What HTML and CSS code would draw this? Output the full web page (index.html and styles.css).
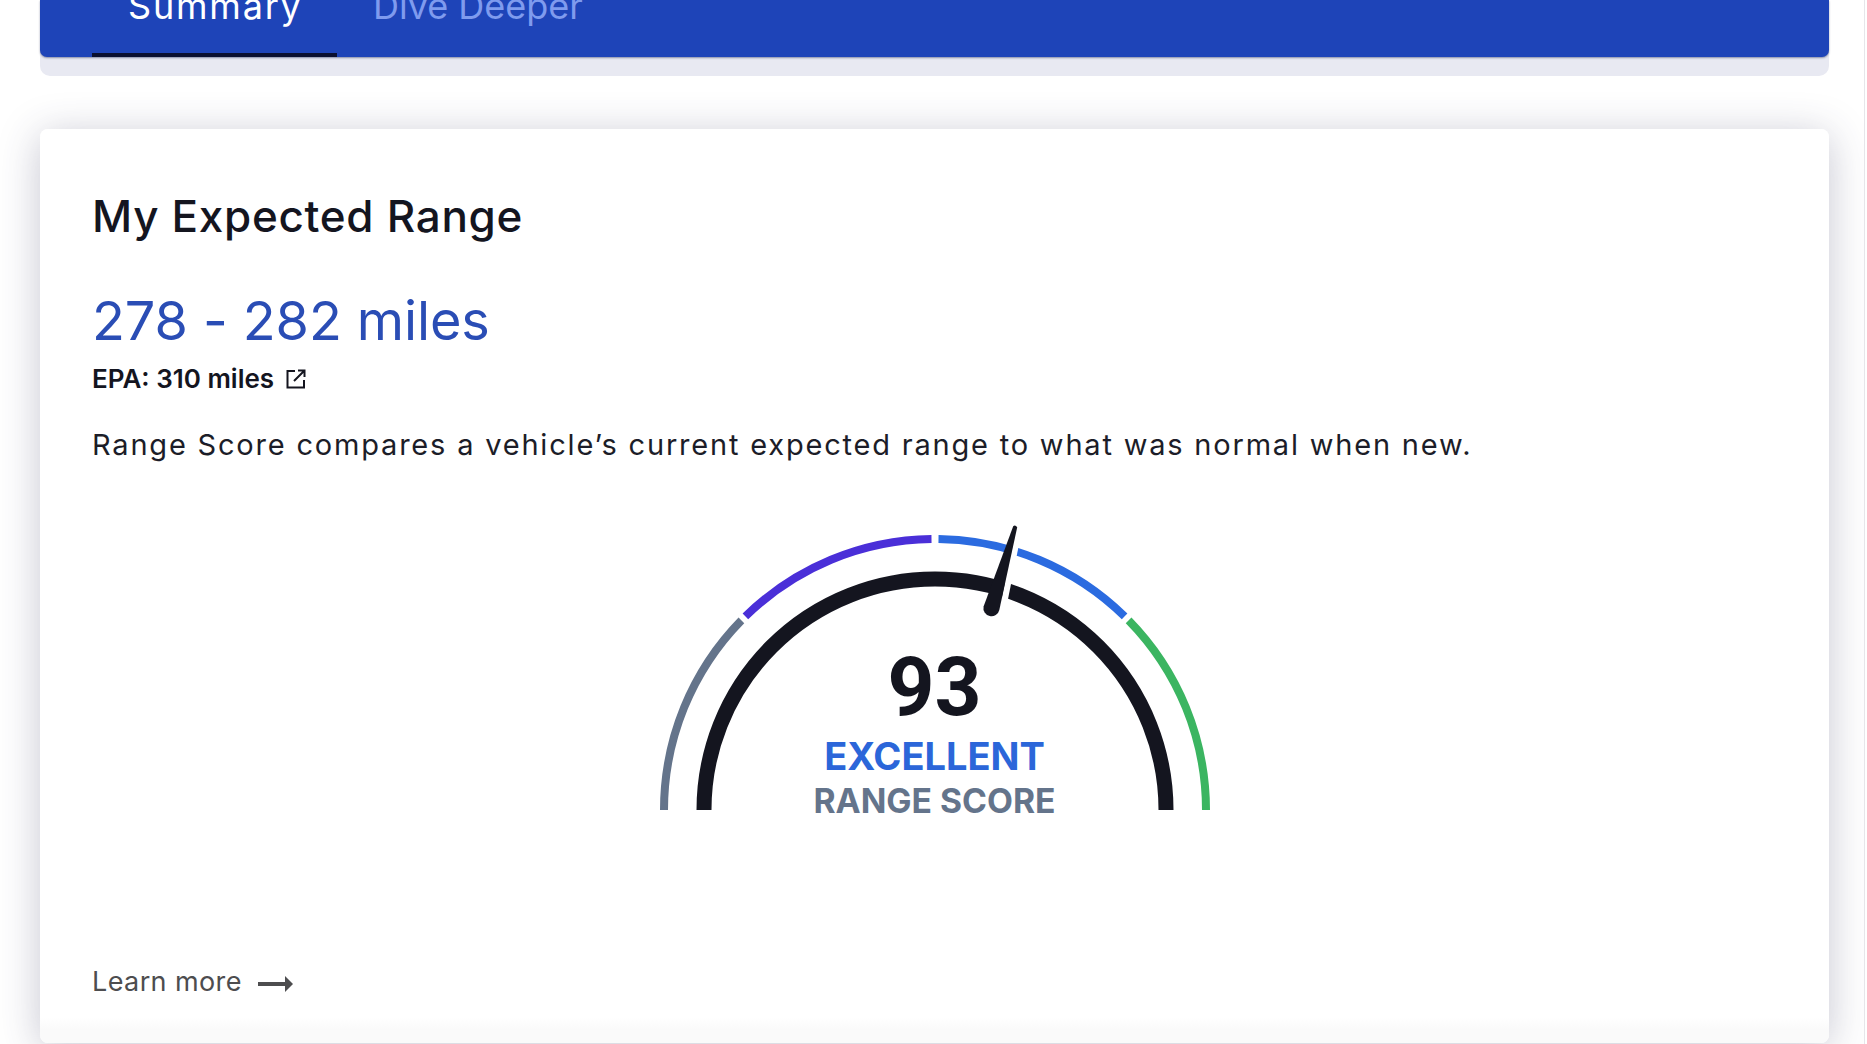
FILE: index.html
```html
<!DOCTYPE html>
<html lang="en">
<head>
<meta charset="utf-8">
<title>My Expected Range</title>
<link rel="stylesheet" href="styles.css">
</head>
<body>
<div class="page">
  <main class="content">
    <div class="tabs-wrap">
      <nav class="tabs">
        <a class="tab tab-active">Summary</a>
        <a class="tab">Dive Deeper</a>
      </nav>
    </div>
    <section class="card">
      <h1 class="title">My Expected Range</h1>
      <p class="range">278 - 282 miles</p>
      <p class="epa">EPA: 310 miles
        <svg class="ext" viewBox="0 0 20 20" width="20" height="20" fill="none" stroke="#14151f" stroke-width="2"><path d="M9 2H1.5v16.500H18V11"/><path d="M8 12 18 2M12 1.500h6.500V8"/></svg>
      </p>
      <p class="desc">Range Score compares a vehicle’s current expected range to what was normal when new.</p>
      <div class="gauge">
        <svg class="dial" viewBox="0 0 560 291" width="560" height="291" fill="none">
          <path d="M9 291A271 271 0 0 1 86.4 101.400" stroke="#64748b" stroke-width="8"/>
          <path d="M90.400 97.400A271 271 0 0 1 276.500 20" stroke="#4a2fd8" stroke-width="8"/>
          <path d="M283.500 20A271 271 0 0 1 469.600 97.400" stroke="#2b6be0" stroke-width="8"/>
          <path d="M473.600 101.400A271 271 0 0 1 551 291" stroke="#3bb561" stroke-width="8"/>
          <path d="M49 291A231 231 0 0 1 511 291" stroke="#14151f" stroke-width="15"/>
          <path d="M362 6 367.500 8 350 95 344 92Z" fill="#fff"/>
          <path d="M358.200 7.300Q360.200 5.500 362.200 8.300L344.300 91A8 8 0 0 1 328.600 87.500Z" fill="#14151f"/>
        </svg>
        <div class="score">
          <div class="score-num">93</div>
          <div class="score-label">EXCELLENT</div>
          <div class="score-sub">RANGE SCORE</div>
        </div>
      </div>
      <a class="learn">Learn more
        <svg class="arrow" viewBox="0 0 35 16" width="35" height="16"><path d="M0 6H27V0L35 8 27 16V10H0Z" fill="#4d4d4f"/></svg>
      </a>
    </section>
  </main>
  <div class="scrollbar"></div>
</div>
</body>
</html>
```
FILE: styles.css
```css
* { box-sizing: border-box; }
html, body { margin: 0; height: 100%; overflow: hidden; background: #fff; }
body { font-family: Inter, "Liberation Sans", sans-serif; color: #14151f; }
p, h1 { margin: 0; }

.page { display: flex; height: 1044px; overflow: hidden; }
.content { flex: 1; padding: 0 35px 0 40px; min-width: 0; }
.scrollbar { width: 3px; background: #fff; border-left: 1px solid #e6e6ea; }

.tabs-wrap { height: 76px; background: #e8e9f2; border-radius: 0 0 10px 10px; }
.tabs {
  display: flex; height: 57px; padding-left: 52px;
  background: #1e44b8; border-radius: 0 0 7px 7px;
  box-shadow: 0 1px 2px rgba(20, 30, 80, .45); overflow: hidden;
}
.tab {
  display: block; width: 245px; height: 57px; padding: 6px 0 0 36px;
  font-size: 36px; line-height: 0; color: #7f9bee; white-space: nowrap;
}
.tab-active { color: #fff; letter-spacing: 1.8px; border-bottom: 4px solid #0a0f30; }

.card {
  margin-top: 53px; height: 914px; padding: 62px 52px 0 52px;
  display: flex; flex-direction: column; align-items: flex-start;
  background: linear-gradient(#fff 889px, #fafafa 900px);
  border-radius: 8px;
  box-shadow: 0 6px 42px rgba(50, 50, 90, .28);
}
.title { font-size: 44px; line-height: 50px; font-weight: 500; letter-spacing: .7px; color: #14151f; }
.range { margin-top: 48px; font-size: 54px; line-height: 64px; font-weight: 400; letter-spacing: -.1px; color: #2a4db5; }
.epa { margin-top: 11px; display: flex; align-items: center; gap: 12px; font-size: 26px; line-height: 30px; font-weight: 600; color: #14151f; }
.ext { flex: none; }
.desc { margin-top: 33px; font-size: 29px; line-height: 36px; letter-spacing: 1.8px; color: #1c1d28; white-space: nowrap; }

.gauge { position: relative; align-self: center; width: 560px; height: 291px; margin-top: 56px; }
.dial { display: block; }
.score { position: absolute; left: 0; right: 0; top: 123px; display: flex; flex-direction: column; align-items: center; }
.score-num { font-family: Roboto, sans-serif; font-weight: 700; font-size: 82px; line-height: 90px; color: #14151f; }
.score-label { margin-top: 2px; font-size: 38px; line-height: 44px; font-weight: 700; color: #2b66d9; }
.score-sub { margin-top: 3px; font-size: 33.7px; line-height: 40px; font-weight: 700; color: #64748b; }

.learn { margin-top: 156px; display: flex; align-items: center; gap: 16px; font-size: 27px; line-height: 32px; letter-spacing: .4px; color: #4d4d4f; }
.arrow { flex: none; margin-top: 3px; }
```
